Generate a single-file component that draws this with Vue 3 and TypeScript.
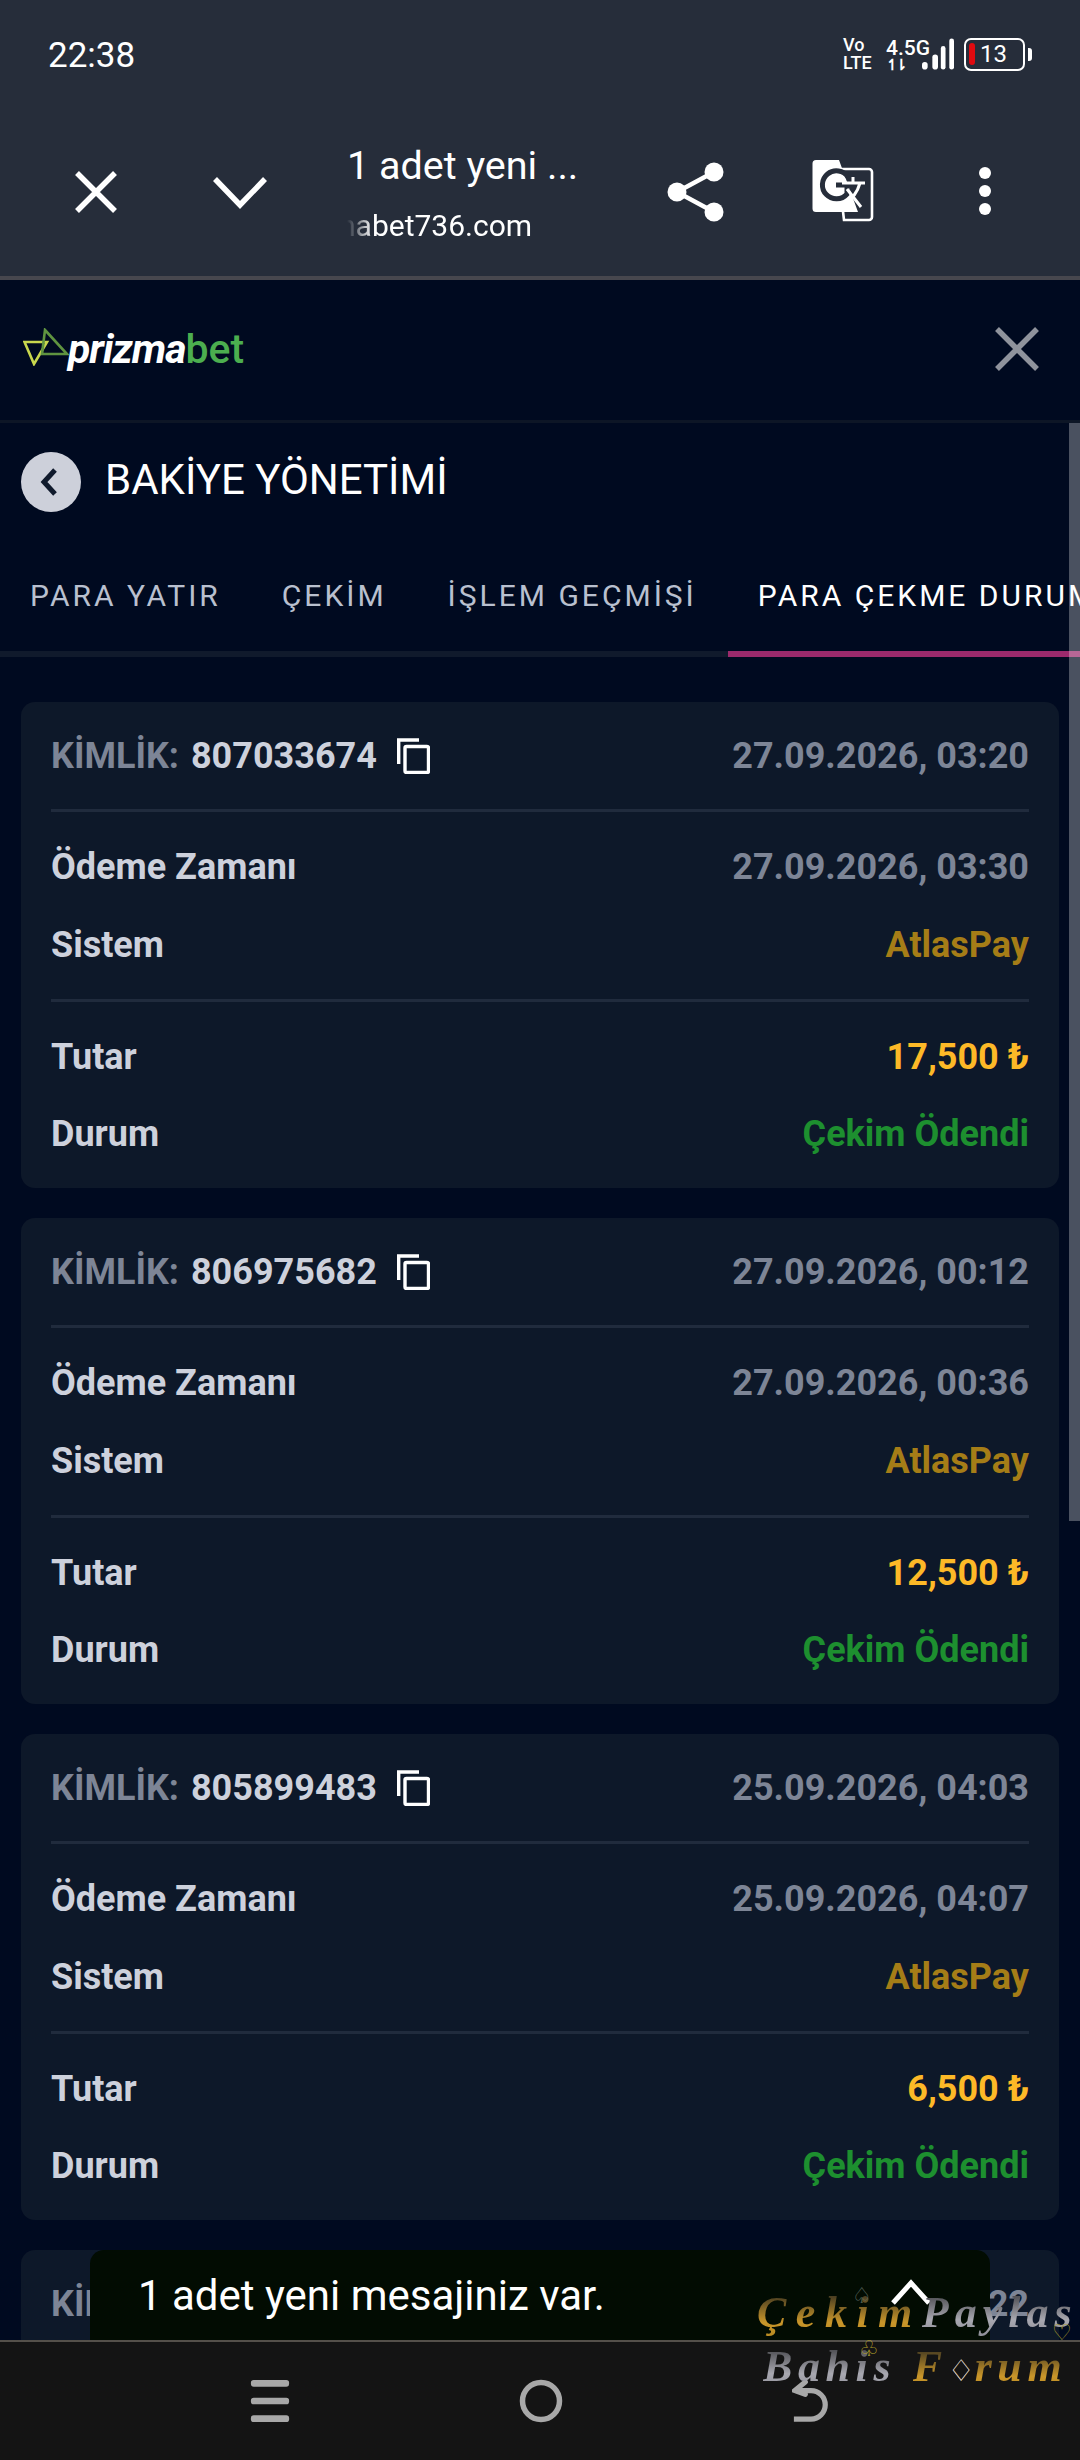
<script setup lang="ts">
interface Row { id: string; created: string; paid: string; amount: string }
const rows: Row[] = [
  { id: '807033674', created: '27.09.2026, 03:20', paid: '27.09.2026, 03:30', amount: '17,500 ₺' },
  { id: '806975682', created: '27.09.2026, 00:12', paid: '27.09.2026, 00:36', amount: '12,500 ₺' },
  { id: '805899483', created: '25.09.2026, 04:03', paid: '25.09.2026, 04:07', amount: '6,500 ₺' },
  { id: '805700000', created: '25.09.2026, 02:22', paid: '25.09.2026, 02:30', amount: '6,500 ₺' },
]
const tabs = ['PARA YATIR', 'ÇEKİM', 'İŞLEM GEÇMİŞİ', 'PARA ÇEKME DURUMU']
</script>

<template>
  <div class="phone">
    <header class="chrome">
      <div class="status">
        <span class="time">22:38</span>
        <div class="indicators">
          <span class="volte">Vo<br />LTE</span>
          <span class="net">4.5G<small>↿⇂</small></span>
          <svg class="bars" width="32" height="33" viewBox="0 0 34 34" fill="#fff">
            <rect x="0" y="25" width="6" height="8" rx="3" />
            <rect x="11" y="17" width="6" height="16" rx="3" />
            <rect x="20" y="8" width="5" height="25" rx="2.5" />
            <rect x="29" y="0" width="5" height="33" rx="2.5" />
          </svg>
          <div class="battery"><i></i><span>13</span></div>
          <b class="cap"></b>
        </div>
      </div>
      <div class="bar">
        <button class="ic ic-x" aria-label="close">
          <svg width="44" height="44" viewBox="0 0 44 44"><path d="M3 3 41 41M41 3 3 41" stroke="#fff" stroke-width="5.5" fill="none" /></svg>
        </button>
        <button class="ic ic-down" aria-label="collapse">
          <svg width="56" height="34" viewBox="0 0 56 34"><path d="M3 4 28 30 53 4" stroke="#fff" stroke-width="5.5" fill="none" /></svg>
        </button>
        <div class="page-title">
          <div class="t1">1 adet yeni ...</div>
          <div class="t2"><span>nabet736.com</span></div>
        </div>
        <button class="ic ic-share" aria-label="share">
          <svg width="58" height="60" viewBox="0 0 58 60" fill="#fff">
            <circle cx="47" cy="10" r="9.5" /><circle cx="10" cy="30" r="9.5" /><circle cx="47" cy="50" r="9.5" />
            <path d="M47 10 10 30 47 50" stroke="#fff" stroke-width="4.5" fill="none" />
          </svg>
        </button>
        <button class="ic ic-tr" aria-label="translate">
          <svg width="62" height="62" viewBox="0 0 62 62">
            <path d="M26 9H57a3 3 0 0 1 3 3V57a3 3 0 0 1-3 3H32Z" fill="none" stroke="#fff" stroke-width="2.6" />
            <path d="M4 0H27L46 52H4a3.500 3.500 0 0 1-3.500-3.500V3.500A3.500 3.500 0 0 1 4 0Z" fill="#fff" />
            <path d="M36 17 A14 14 0 1 0 35 34 V25 H24" fill="none" stroke="#262d3a" stroke-width="5" />
            <path d="M30 23H53M41 17V23M48 23C45 34 39 40 32 44M35 29 49 47" fill="none" stroke="#fff" stroke-width="3" />
          </svg>
        </button>
        <button class="ic ic-more" aria-label="more"><i></i><i></i><i></i></button>
      </div>
    </header>

    <main class="site">
      <div class="brand">
        <div class="logo">
          <svg width="46" height="38" viewBox="0 0 46 38" fill="none">
            <path d="M1.500 14H24L11 36Z" stroke="#c9d84e" stroke-width="2.600" />
            <path d="M22 2 44 26H19Z" stroke="#5f9440" stroke-width="2.600" />
          </svg>
          <span class="w">prizma</span><span class="g">bet</span>
        </div>
        <svg class="close" width="44" height="44" viewBox="0 0 44 44"><path d="M2 2 42 42M42 2 2 42" stroke="#8f939c" stroke-width="5.500" fill="none" /></svg>
      </div>

      <div class="heading">
        <span class="back">
          <svg width="20" height="30" viewBox="0 0 20 30"><path d="M16 3 5 15 16 27" stroke="#101a2c" stroke-width="5" fill="none" /></svg>
        </span>
        <h1>BAKİYE YÖNETİMİ</h1>
      </div>

      <nav class="tabs">
        <span v-for="(t, i) in tabs" :key="t" class="tab" :class="{ active: i === 3 }">{{ t }}</span>
      </nav>

      <section class="list">
        <article v-for="r in rows" :key="r.id" class="card">
          <div class="row head">
            <div class="idcell">
              <span class="muted">KİMLİK:</span>
              <span class="idv">{{ r.id }}</span>
              <svg class="copy" width="33" height="36" viewBox="0 0 33 36" fill="none" stroke="#fff" stroke-width="3.400">
                <path d="M1.700 26V2H22" />
                <rect x="8" y="8.500" width="23.500" height="26" rx="1.500" />
              </svg>
            </div>
            <span class="muted">{{ r.created }}</span>
          </div>
          <div class="group">
            <div class="row"><span class="label">Ödeme Zamanı</span><span class="muted">{{ r.paid }}</span></div>
            <div class="row"><span class="label">Sistem</span><span class="atlas">AtlasPay</span></div>
          </div>
          <div class="group">
            <div class="row"><span class="label">Tutar</span><span class="amount">{{ r.amount }}</span></div>
            <div class="row last"><span class="label">Durum</span><span class="paid">Çekim Ödendi</span></div>
          </div>
        </article>
      </section>

      <div class="scrollbar"></div>

      <div class="toast">
        <span>1 adet yeni mesajiniz var.</span>
        <svg width="40" height="26" viewBox="0 0 40 26"><path d="M2 24 20 4 38 24" stroke="#fff" stroke-width="5" fill="none" /></svg>
      </div>
    </main>

    <footer class="nav">
      <svg width="40" height="42" viewBox="0 0 40 44" fill="#a8a8a8">
        <rect x="0" y="0" width="40" height="7" rx="3" />
        <rect x="0" y="18.500" width="40" height="7" rx="3" />
        <rect x="0" y="37" width="40" height="7" rx="3" />
      </svg>
      <svg width="44" height="44" viewBox="0 0 44 44"><circle cx="22" cy="22" r="18.500" stroke="#a8a8a8" stroke-width="5.500" fill="none" /></svg>
      <svg width="38" height="42" viewBox="0 0 40 44" fill="none" stroke="#a8a8a8" stroke-width="5.500">
        <path d="M14 2 3 11 14 15" stroke-linecap="round" />
        <path d="M4 11H20a15 15 0 0 1 15 15v0a15 15 0 0 1-15 15H2" />
      </svg>
    </footer>

    <div class="mark">
      <div class="m1"><span class="gold wide">Çekim</span><span class="silver">Paylas</span></div>
      <div class="m2"><span class="silver">Bahis</span> <span class="gold">F<em>♢</em>rum</span></div>
      <i class="suit s1">♤</i><i class="suit s2">♡</i><i class="suit s3">♧</i>
    </div>
  </div>
</template>

<style scoped>
.phone {
  position: relative;
  width: 1080px;
  height: 2460px;
  overflow: hidden;
  display: flex;
  flex-direction: column;
  background: #000a20;
  font-family: Roboto, "Noto Sans", sans-serif;
}
button { background: none; border: 0; padding: 0; display: flex; align-items: center; justify-content: center; }

.chrome { height: 280px; box-sizing: border-box; background: #262d3a; border-bottom: 4px solid #47474e; flex: none; }
.status { height: 110px; padding: 0 48px 0 48px; display: flex; align-items: center; justify-content: space-between; }
.time { color: #fff; font-size: 35px; }
.indicators { display: flex; align-items: center; color: #fff; margin-top: -2px; }
.volte { font-size: 18px; line-height: 18px; font-weight: 500; width: 43px; }
.net { font-size: 21px; line-height: 22px; font-weight: 500; width: 36px; display: flex; flex-direction: column; white-space: nowrap; }
.net small { font-size: 15px; line-height: 13px; font-weight: 700; letter-spacing: -4px; }
.bars { margin-left: 0; }
.battery {
  margin-left: 10px;
  width: 61px; height: 33px; box-sizing: border-box;
  border: 2.500px solid #fff; border-radius: 7px;
  display: flex; align-items: center; padding-left: 3px;
}
.battery i { width: 6px; height: 22px; background: #e00a10; border-radius: 3px; }
.battery span { font-size: 24px; margin-left: 5px; }
.cap { width: 4px; height: 13px; background: #fff; border-radius: 0 3px 3px 0; margin-left: 3px; }

.bar { height: 166px; position: relative; display: flex; align-items: center; }
.ic-x { width: 44px; margin-left: 74px; margin-top: -2px; }
.ic-down { width: 56px; margin-left: 94px; margin-top: -2px; }
.page-title { width: 240px; margin-left: 79px; color: #fff; white-space: nowrap; overflow: hidden; margin-top: -1px; }
.t1 { font-size: 39.500px; line-height: 52px; }
.t2 {
  font-size: 30px; line-height: 40px; margin-top: 14px; width: 190px; overflow: hidden;
  -webkit-mask-image: linear-gradient(90deg, transparent 0, #000 26px);
  mask-image: linear-gradient(90deg, transparent 0, #000 26px);
}
.t2 span { display: block; margin-left: -8px; }
.ic-share { width: 58px; margin-left: 80px; margin-top: -2px; }
.ic-tr { width: 62px; margin-left: 87px; margin-top: -4px; }
.ic-more { width: 16px; margin-left: 103px; flex-direction: column; gap: 5.500px; margin-top: -4px; }
.ic-more i { width: 12.500px; height: 12.500px; background: #fff; border-radius: 50%; }

.site { position: relative; flex: 1; min-height: 0; overflow: hidden; }
.brand { height: 143px; box-sizing: border-box; border-bottom: 3px solid #0d1626; display: flex; align-items: center; justify-content: space-between; padding: 0 41px 0 23px; }
.logo { display: flex; align-items: center; font-size: 41px; font-weight: 700; letter-spacing: -1px; margin-top: -2px; }
.logo svg { margin-right: -1px; margin-top: -4px; }
.w { color: #fff; font-style: italic; }
.g { color: #4cae4f; font-weight: 500; letter-spacing: 0; }
.close { margin-top: -2px; }

.heading { height: 117px; display: flex; align-items: center; padding-left: 21px; gap: 24px; }
.back { width: 60px; height: 60px; background: #cdd0da; border-radius: 50%; display: flex; align-items: center; justify-content: center; }
.back svg { margin-left: -4px; }
h1 { margin: 0; color: #fff; font-size: 42px; font-weight: 400; margin-top: -4px; }

.tabs {
  height: 117px; box-sizing: border-box; display: flex; box-shadow: inset 0 -6px 0 #101a2c; white-space: nowrap; overflow: hidden;
}
.tab { flex: none; padding: 0 31px 0 30px; height: 117px; line-height: 112px; color: #b9c0cf; font-size: 30px; letter-spacing: 3px; box-sizing: border-box; }
.tab.active { color: #fff; border-bottom: 6px solid #9b2a6c; }

.list { padding: 45px 21px 0; display: flex; flex-direction: column; gap: 30px; }
.card { background: #0d1829; border-radius: 14px; padding: 0 30px; height: 486px; box-sizing: border-box; flex: none; }
.row { display: flex; justify-content: space-between; align-items: center; height: 78px; font-size: 36px; font-weight: 700; white-space: nowrap; }
.head { height: 107px; }
.group { border-top: 3px solid #202b3d; padding: 16px 0 15px; }
.group .row { height: 78px; }
.group .row.last { height: 76px; }
.group + .group { padding-bottom: 0; }
.idcell { display: flex; align-items: center; }
.idv { color: #cdd1dc; margin-left: 12px; }
.copy { margin-left: 20px; }
.muted { color: #7d8596; }
.label { color: #cdd1dc; }
.atlas { color: #a57d17; }
.amount { color: #fdb927; }
.paid { color: #1d8f2f; }

.scrollbar { position: absolute; top: 143px; right: 0; width: 11px; height: 1098px; background: rgba(255, 255, 255, 0.29); }

.toast {
  position: absolute; left: 90px; right: 90px; bottom: 0; height: 90px; box-sizing: border-box;
  background: #020c02; border-radius: 14px 14px 0 0; color: #fff; font-size: 42px;
  display: flex; align-items: flex-start; justify-content: space-between; padding: 21px 59px 0 48px;
}
.toast svg { margin-top: 8px; }

.nav { flex: none; height: 120px; box-sizing: border-box; border-top: 2px solid #54504a; background: #141414; display: flex; align-items: center; justify-content: space-between; padding: 0 250px 0 250px; }

.mark {
  position: absolute; left: 752px; top: 2288px; width: 328px; height: 100px; pointer-events: none;
  font-family: "Liberation Serif", serif; font-style: italic; font-weight: 700; font-size: 44px; white-space: nowrap; line-height: 50px;
}
.m1 { margin-left: 5px; letter-spacing: 6px; }
.m1 .wide { letter-spacing: 9.500px; }
.m2 { margin-left: 11px; margin-top: 4px; letter-spacing: 5.600px; }
.gold { background: linear-gradient(180deg, #3a3320 10%, #c9962a 70%, #b88a22); -webkit-background-clip: text; background-clip: text; color: transparent; }
.silver { background: linear-gradient(180deg, #3c3c40 5%, #a8a8b0 65%, #8c8c96); -webkit-background-clip: text; background-clip: text; color: transparent; }
.gold em { font-family: "DejaVu Sans", sans-serif; font-style: normal; font-weight: 400; font-size: 30px; color: #c8c8d0; -webkit-text-fill-color: #c8c8d0; letter-spacing: 0; }
.suit { position: absolute; font-family: "DejaVu Sans", sans-serif; font-style: normal; font-weight: 400; font-size: 22px; line-height: 22px; }
.s1 { left: 100px; top: -3px; color: #5d6b60; }
.s2 { left: 300px; top: 34px; color: #a99c2c; }
.s3 { left: 107px; top: 50px; color: #b4a02a; }
</style>
